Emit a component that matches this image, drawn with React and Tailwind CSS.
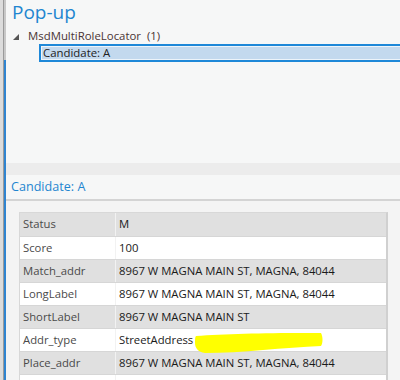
import React from "react";

const rows = [
  ["Status", "M", true],
  ["Score", "100", false],
  ["Match_addr", "8967 W MAGNA MAIN ST, MAGNA, 84044", true],
  ["LongLabel", "8967 W MAGNA MAIN ST, MAGNA, 84044", false],
  ["ShortLabel", "8967 W MAGNA MAIN ST", true],
  ["Addr_type", "StreetAddress", false],
  ["Place_addr", "8967 W MAGNA MAIN ST, MAGNA, 84044", true],
  ["", "", false],
];

export default function App() {
  return (
    <div
      className="relative w-[400px] h-[380px] overflow-hidden flex bg-[#f6f7f7] text-[12px]"
      style={{ fontFamily: '"Segoe UI", "Open Sans", "Noto Sans", sans-serif' }}
    >
      {/* left strip */}
      <div className="w-[4px] h-full shrink-0 bg-[#dcdcdc] border-r border-[#9a9a9a]" />
      <div className="w-[2px] h-full shrink-0 flex flex-col">
        <div className="h-[60px] shrink-0 bg-[#c8c8c8]" />
        <div className="flex-1 bg-[#2f84d0]" />
      </div>
      <div className="flex-1 flex flex-col min-w-0 h-full">
        {/* top panel */}
        <div className="h-[163px] shrink-0 flex flex-col bg-[#f6f7f7]">
          <div className="h-[28px] shrink-0 pl-[6px] pt-[0px] text-[19px] leading-[24px] text-[#1f86d0]">Pop-up</div>
          <div className="h-[16px] shrink-0 flex items-center pl-[7px] text-[11.4px] text-[#4a3434]">
            <svg width="6" height="6" viewBox="0 0 6 6" className="mr-[9px] mt-[1px]">
              <polygon points="6,0 6,6 0,6" fill="#555" />
            </svg>
            <span>MsdMultiRoleLocator&nbsp;&nbsp;(1)</span>
          </div>
          <div className="shrink-0 ml-[33px] h-[18px] border-y-2 border-l-2 border-[#1e88d8] bg-[#c3d9ee] flex items-center">
            <div className="w-full h-full border border-white/70 border-r-0 flex items-center pl-[1px] text-[11.4px] text-[#222]">
              Candidate: A
            </div>
          </div>
        </div>
        {/* splitter */}
        <div className="h-[12px] shrink-0 bg-[#ececec]" />
        {/* header */}
        <div className="h-[24px] shrink-0 flex items-center pl-[5px] pt-[1px] text-[12.6px] text-[#1f86d0] bg-[#f6f7f7]">
          Candidate: A
        </div>
        <div className="h-[2px] shrink-0 bg-[#d4d4d4]" />
        {/* content */}
        <div className="flex-1 min-h-0 overflow-hidden bg-[#f4f4f4] pt-[11px] pl-[13px]">
          <div className="w-[369px] border border-[#d8d8d8] border-r-2 border-r-[#d0d0d0]">
            {rows.map(([k, v, gray], i) => (
              <div
                key={i}
                className={`h-[23px] flex text-[11.3px] ${gray ? "bg-[#e0e0e0]" : "bg-white"} ${i > 0 ? "border-t border-[#d6d6d6]" : ""}`}
              >
                <div className="w-[96px] pl-[3px] flex items-center text-[#4a4a4a] border-r border-[#f2f2f2]">{k}</div>
                <div className="flex-1 pl-[3px] flex items-center text-[#1a1a1a]">{v}</div>
              </div>
            ))}
          </div>
        </div>
      </div>
      {/* yellow highlight */}
      <svg className="absolute left-[193px] top-[331px]" width="132" height="24" viewBox="0 0 132 24">
        <path
          d="M3 5 C30 3 70 2 110 2 L128 2 C130 6 130 12 128 15 C110 16 90 17 70 19 C50 21 30 22 12 22 C5 21 2 17 2 12 C2 8 2 6 3 5 Z"
          fill="#ffff00"
        />
      </svg>
    </div>
  );
}
